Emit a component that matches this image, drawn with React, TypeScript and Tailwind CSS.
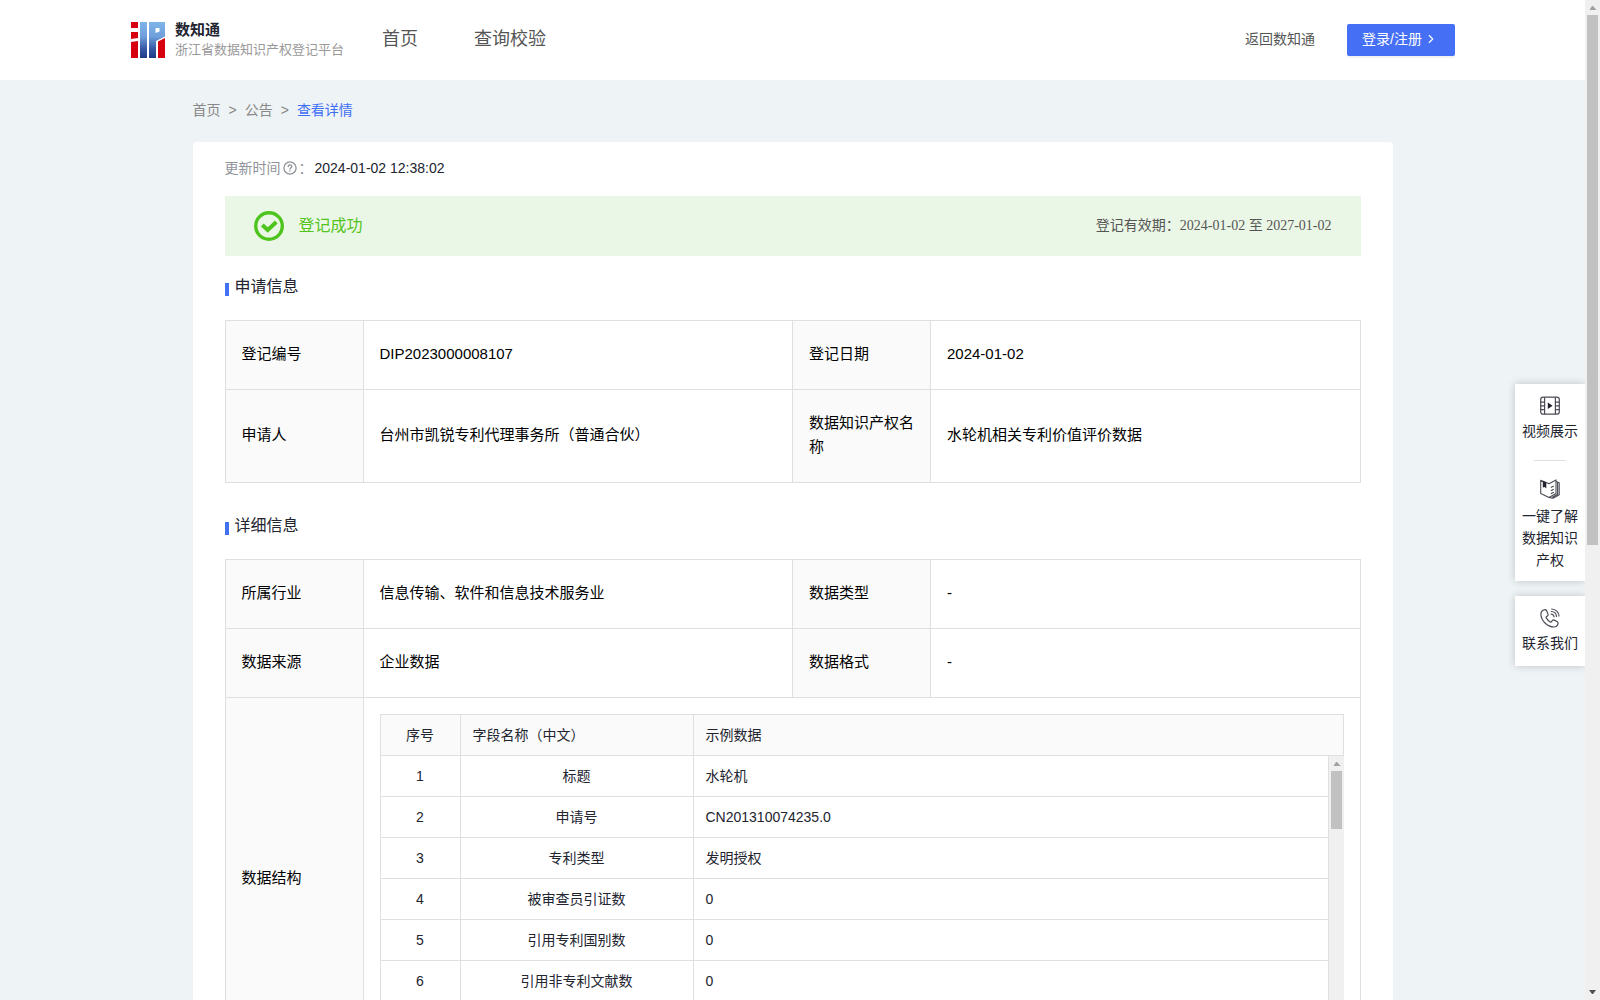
import React from 'react';
import { ChevronRight } from 'lucide-react';

interface StructureRow {
  name: string;
  sample: string;
}

const STRUCTURE_ROWS: StructureRow[] = [
  { name: '标题', sample: '水轮机' },
  { name: '申请号', sample: 'CN201310074235.0' },
  { name: '专利类型', sample: '发明授权' },
  { name: '被审查员引证数', sample: '0' },
  { name: '引用专利国别数', sample: '0' },
  { name: '引用非专利文献数', sample: '0' },
];

const Logo: React.FC = () => (
  <svg className="h-9 w-[34px] shrink-0" viewBox="0 0 34 36" aria-hidden="true">
    <defs>
      <linearGradient id="logoBlue" gradientUnits="userSpaceOnUse" x1="0" y1="0" x2="0" y2="36">
        <stop offset="0" stopColor="#7fb4e8" />
        <stop offset="0.4" stopColor="#6f9fdc" />
        <stop offset="0.75" stopColor="#3558a4" />
        <stop offset="1" stopColor="#1f3a86" />
      </linearGradient>
    </defs>
    <path fill="#d7000f" d="M0 0h7v6H0zM0 10h7v6l-7 1zM0 20l7-1v17H0z" />
    <path fill="#d7000f" d="M27 19.500l7-3.500v20h-7z" />
    <path fill="url(#logoBlue)" d="M9 0h7v36H9z" />
    <path fill="url(#logoBlue)" fillRule="evenodd" d="M18 0h16v14.500l-9 4.500v17h-7zM24.500 6v5l4-1.500V6z" />
  </svg>
);

const QuestionIcon: React.FC = () => (
  <svg className="h-3.5 w-3.5" viewBox="0 0 14 14" fill="none" stroke="#909399" strokeLinecap="round">
    <circle cx="7" cy="7" r="6.1" strokeWidth="1.3" />
    <path strokeWidth="1.4" d="M5.2 5.6c0-1 .8-1.7 1.8-1.7s1.8.7 1.8 1.6c0 1.2-1.8 1.3-1.8 2.500M7 9.900v.2" />
  </svg>
);

const CheckIcon: React.FC = () => (
  <svg className="h-[30px] w-[30px]" viewBox="0 0 30 30" fill="none" stroke="#4ec51e">
    <circle cx="15" cy="15" r="13.300" strokeWidth="3.400" />
    <path strokeWidth="4" d="M8.300 14l5.400 5 8.600-8" />
  </svg>
);

const VideoIcon: React.FC = () => (
  <svg className="h-5 w-5" viewBox="0 0 20 20" fill="none" stroke="#4a4b55" strokeWidth="1.2">
    <rect x="0.7" y="1.2" width="18.6" height="17" rx="2.4" />
    <path d="M4.6 1.2v17M15.4 1.2v17M.7 6.2h3.900M.7 9.800h3.900M.7 13.600h3.900M15.4 6.200h3.900M15.4 9.800h3.900M15.4 13.600h3.900" />
    <path fill="#22232c" stroke="none" d="M7.800 6.600l4.800 3.200-4.800 3.200z" />
  </svg>
);

const BookIcon: React.FC = () => (
  <svg className="h-5 w-5" viewBox="0 0 20 20" fill="none" stroke="#4a4b55" strokeWidth="1.1" strokeLinejoin="round">
    <path d="M.7 1.300L9 4.800 16 .9v13.600l-7 3.900-8.300-3.900z" />
    <path d="M16 2.600l3.200 1.200v12L13 19.300l-4-.9M17.600 3.400v11.800l-5.300 3" />
    <path d="M10.800 8.600l3-1.500M10.800 11.800l3-1.500M10.800 14.800l3-1.500" />
    <path fill="#22232c" stroke="none" d="M2.800 1.800l3.500 1.600v6.200L4.600 7.900 2.800 8.400z" />
  </svg>
);

const PhoneIcon: React.FC = () => (
  <svg className="h-5 w-5" viewBox="0 0 20 20" fill="none" stroke="#4a4b55" strokeWidth="1.2" strokeLinecap="round" strokeLinejoin="round">
    <path d="M4.900 1.600c-2 .4-4 2.300-4 4.600C1.100 12.600 7.300 18.900 13.800 19c2.200 0 4-1.700 4.300-3.600.1-.8-.2-1.300-.8-1.700l-3-1.600c-.8-.4-1.500-.2-2 .5l-.8 1.100c-.3.4-.8.5-1.300.2-1.700-1-3-2.300-4-4-.3-.5-.2-1 .3-1.300l1-.7c.7-.5.9-1.200.5-2L6.500 2.500c-.3-.7-.8-1-1.600-.9z" />
    <path d="M11.700 1c4 .2 7.100 3.200 7.300 7M11.300 3.500c2.900.1 5 2.200 5.200 5M11 6c1.600.1 2.800 1.200 3 2.800" />
  </svg>
);

const SectionTitle: React.FC<{ children: React.ReactNode }> = ({ children }) => (
  <h2 className="flex h-16 items-center gap-1.5 pb-0.5 text-base text-[#22242f]">
    <span className="mt-1 h-[13px] w-1 bg-[#4371f4]" />
    {children}
  </h2>
);

const LabelCell: React.FC<{ children: React.ReactNode }> = ({ children }) => (
  <th scope="row" className="border border-[#dfdfdf] bg-[#fafafa] px-4 pt-[21px] pb-[23px] text-left font-normal">
    {children}
  </th>
);

const ValueCell: React.FC<{ children: React.ReactNode }> = ({ children }) => (
  <td className="border border-[#dfdfdf] px-4 pt-[21px] pb-[23px]">{children}</td>
);

const InfoTable: React.FC<{ children: React.ReactNode }> = ({ children }) => (
  <table className="w-full table-fixed border-collapse text-[15px] leading-6 text-black">
    <colgroup>
      <col className="w-[138px]" />
      <col />
      <col className="w-[138px]" />
      <col />
    </colgroup>
    <tbody>{children}</tbody>
  </table>
);

const StructureCols: React.FC = () => (
  <colgroup>
    <col className="w-20" />
    <col className="w-[233px]" />
    <col />
  </colgroup>
);

const StructureTable: React.FC = () => (
  <div className="text-sm leading-5 text-[#22242f]">
    <table className="w-full table-fixed border-separate border-spacing-0 border-t border-l border-[#dfdfdf]">
      <StructureCols />
      <thead>
        <tr className="bg-[#fafafa]">
          <th className="border-r border-b border-[#dfdfdf] px-3 py-[10px] text-center font-normal">序号</th>
          <th className="border-r border-b border-[#dfdfdf] px-3 py-[10px] text-left font-normal">字段名称（中文）</th>
          <th className="border-r border-b border-[#dfdfdf] px-3 py-[10px] text-left font-normal">示例数据</th>
        </tr>
      </thead>
    </table>
    <div className="flex h-[287px] overflow-hidden">
      <div className="min-w-0 flex-1">
        <table className="w-full table-fixed border-separate border-spacing-0 border-l border-[#dfdfdf]">
          <StructureCols />
          <tbody>
            {STRUCTURE_ROWS.map((row, i) => (
              <tr key={row.name}>
                <td className="border-r border-b border-[#dfdfdf] px-3 py-[10px] text-center">{i + 1}</td>
                <td className="border-r border-b border-[#dfdfdf] px-3 py-[10px] text-center">{row.name}</td>
                <td className="border-r border-b border-[#dfdfdf] px-3 py-[10px]">{row.sample}</td>
              </tr>
            ))}
          </tbody>
        </table>
      </div>
      <div className="flex w-[15px] flex-col items-center bg-[#f0f0f0]" aria-hidden="true">
        <svg className="h-[15px] w-[15px] shrink-0" viewBox="0 0 15 15">
          <path fill="#a0a0a0" d="M7 6h1l3.500 4h-7z" />
        </svg>
        <div className="h-[58px] w-[11px] bg-[#c1c1c1]" />
      </div>
    </div>
  </div>
);

const PageScrollbar: React.FC = () => (
  <div className="flex w-[15px] shrink-0 flex-col items-center bg-[#f0f0f0]" aria-hidden="true">
    <svg className="h-[15px] w-[15px] shrink-0" viewBox="0 0 15 15">
      <path fill="#a0a0a0" d="M7 6h1l3.500 4h-7z" />
    </svg>
    <div className="min-h-0 flex-1">
      <div className="h-[54.6%] w-[11px] bg-[#c1c1c1]" />
    </div>
    <svg className="h-[15px] w-[15px] shrink-0" viewBox="0 0 15 15">
      <path fill="#505050" d="M4 5h7L8 9H7z" />
    </svg>
  </div>
);

const SideTools: React.FC = () => (
  <div className="absolute top-96 right-0 flex w-[70px] flex-col gap-[15px] text-center text-sm leading-[22px] text-[#22242f]">
    <div className="flex flex-col items-center bg-white pt-3 pb-[10px] shadow-[0_0_8px_rgba(0,0,0,0.2)]">
      <a href="#video" className="flex flex-col items-center gap-1 px-1.5">
        <VideoIcon />
        视频展示
      </a>
      <div className="mt-[18px] mb-[18px] h-px w-8 bg-[#dfdfdf]" />
      <a href="#guide" className="flex flex-col items-center gap-1.5 px-1.5">
        <BookIcon />
        一键了解数据知识产权
      </a>
    </div>
    <div className="flex flex-col items-center bg-white pt-3 pb-3 shadow-[0_0_8px_rgba(0,0,0,0.2)]">
      <a href="#contact" className="flex flex-col items-center gap-1 px-1.5">
        <PhoneIcon />
        联系我们
      </a>
    </div>
  </div>
);

const App: React.FC = () => {
  return (
    <div className="flex h-screen overflow-hidden bg-[#eef3f6] font-['Liberation_Sans','Noto_Sans_CJK_SC',sans-serif]">
      <div className="relative min-w-0 flex-1 overflow-hidden">
        {/* Header */}
        <header className="bg-white">
          <div className="mx-auto flex h-20 max-w-[1325px] items-center pb-0.5 pl-px">
            <a href="#home" className="flex items-center gap-[10px] pt-0.5">
              <Logo />
              <span className="flex flex-col">
                <span className="text-[15px] leading-5 font-bold text-[#22242f]">数知通</span>
                <span className="text-[13px] leading-5 text-[#999999]">浙江省数据知识产权登记平台</span>
              </span>
            </a>
            <nav className="ml-[38px] flex gap-14 text-lg text-[#555555]">
              <a href="#home">首页</a>
              <a href="#verify">查询校验</a>
            </nav>
            <a href="#back" className="ml-auto text-sm text-[#555555]">返回数知通</a>
            <div className="ml-8 pt-0.5">
              <button className="flex h-8 w-[108px] items-center gap-0.5 rounded-xs bg-[#456ff4] pb-0.5 pl-[15px] text-sm text-white shadow-[0_2px_0_rgba(0,0,0,0.05)]">
                登录/注册
                <ChevronRight size={14} />
              </button>
            </div>
          </div>
        </header>

        <main className="mx-auto max-w-[1200px]">
          {/* Breadcrumb */}
          <nav className="flex h-[62px] items-center gap-2 pb-0.5 text-sm text-[#888888]">
            <a href="#home">首页</a>
            <span>&gt;</span>
            <a href="#notice">公告</a>
            <span>&gt;</span>
            <a href="#detail" className="text-[#3f6ff5]">查看详情</a>
          </nav>

          <div className="rounded bg-white px-8 pb-8">
            <div className="flex h-[54px] items-center pb-0.5 text-sm text-[#909399]">
              <span>更新时间</span>
              <span className="mx-0.5"><QuestionIcon /></span>
              <span>：</span>
              <span className="ml-0.5 text-[#22242f]">2024-01-02 12:38:02</span>
            </div>

            {/* Status banner */}
            <div className="flex h-[60px] items-center justify-between bg-[#ebf7e6] pr-[29px] pl-[29px]">
              <div className="flex items-center gap-[15px] text-base text-[#52c41a]">
                <CheckIcon />
                登记成功
              </div>
              <p className="font-['Liberation_Serif','Noto_Sans_CJK_SC',serif] text-sm text-[#555555]">
                登记有效期：2024-01-02 至 2027-01-02
              </p>
            </div>

            <SectionTitle>申请信息</SectionTitle>
            <InfoTable>
              <tr>
                <LabelCell>登记编号</LabelCell>
                <ValueCell>DIP2023000008107</ValueCell>
                <LabelCell>登记日期</LabelCell>
                <ValueCell>2024-01-02</ValueCell>
              </tr>
              <tr>
                <LabelCell>申请人</LabelCell>
                <ValueCell>台州市凯锐专利代理事务所（普通合伙）</ValueCell>
                <LabelCell>数据知识产权名称</LabelCell>
                <ValueCell>水轮机相关专利价值评价数据</ValueCell>
              </tr>
            </InfoTable>

            <div className="pt-3">
              <SectionTitle>详细信息</SectionTitle>
            </div>
            <InfoTable>
              <tr>
                <LabelCell>所属行业</LabelCell>
                <ValueCell>信息传输、软件和信息技术服务业</ValueCell>
                <LabelCell>数据类型</LabelCell>
                <ValueCell>-</ValueCell>
              </tr>
              <tr>
                <LabelCell>数据来源</LabelCell>
                <ValueCell>企业数据</ValueCell>
                <LabelCell>数据格式</LabelCell>
                <ValueCell>-</ValueCell>
              </tr>
              <tr>
                <LabelCell>数据结构</LabelCell>
                <td colSpan={3} className="border border-[#dfdfdf] p-4">
                  <StructureTable />
                </td>
              </tr>
            </InfoTable>
          </div>
        </main>

        <SideTools />
      </div>
      <PageScrollbar />
    </div>
  );
};

export default App;
